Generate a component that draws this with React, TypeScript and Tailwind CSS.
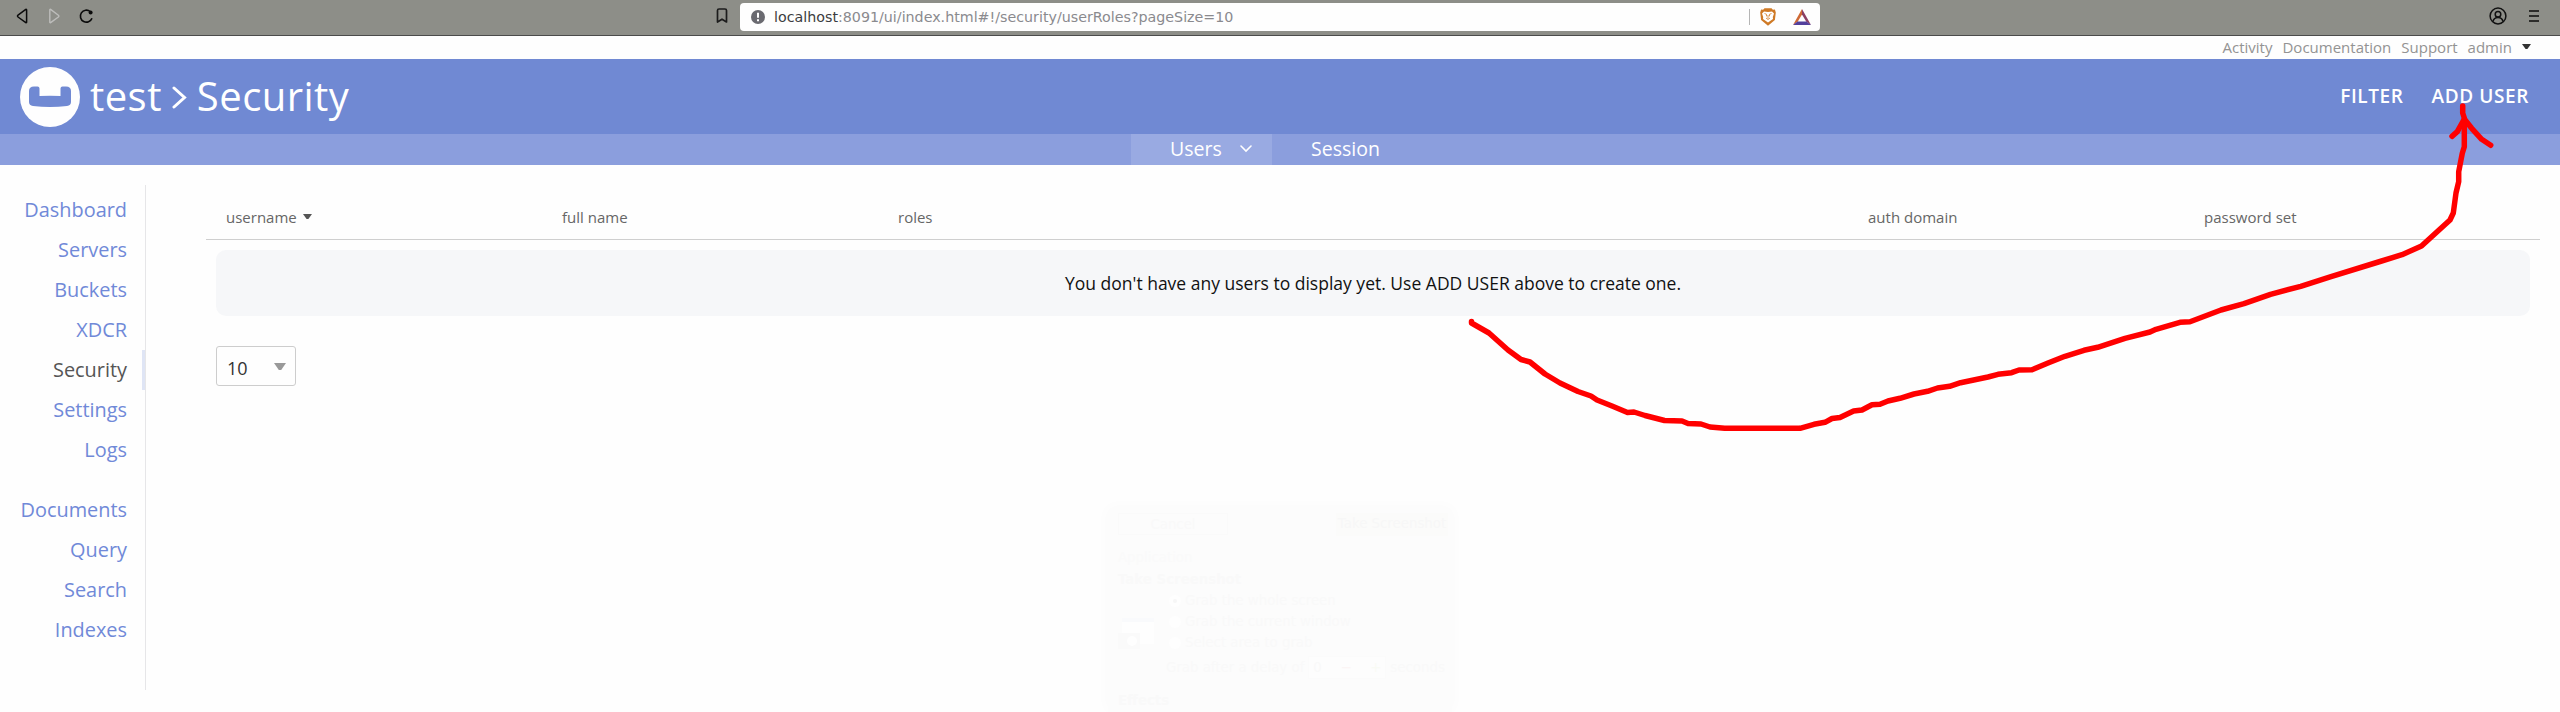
import React from "react";

const primaryLinks = ["Dashboard", "Servers", "Buckets", "XDCR", "Security", "Settings", "Logs"];
const secondaryLinks = ["Documents", "Query", "Search", "Indexes"];

function Caret({ className }: { className: string }) {
  return (
    <svg viewBox="0 0 10 6" preserveAspectRatio="none" className={className}>
      <path d="M0 0h10L6 6H4z" fill="currentColor" />
    </svg>
  );
}

function BrowserBar() {
  return (
    <div className="flex h-9 items-center border-b border-[#4b4b4b] bg-[#8d8e88] pb-[3px] font-['DejaVu_Sans',sans-serif]">
      <div className="flex w-[740px] items-center">
        <svg className="ml-4 h-4 w-3" viewBox="0 0 12 16" fill="none" stroke="#0b0b0b" strokeWidth="1.5" strokeLinejoin="round">
          <path d="M10.6 1.8v12.4c0 .5-.4.6-.8.4L2 9c-.7-.5-.7-1.3 0-1.8L9.8 1.4c.4-.3.8-.1.8.4z" />
        </svg>
        <svg className="ml-5 h-4 w-3" viewBox="0 0 12 16" fill="none" stroke="#bdbdbb" strokeWidth="1.4" strokeLinejoin="round">
          <path d="M1.8 1.8v12.4c0 .5.4.6.8.4L10.4 9c.7-.5.7-1.3 0-1.8L2.6 1.4c-.4-.3-.8-.1-.8.4z" />
        </svg>
        <svg className="ml-[19px] h-4 w-[15px]" viewBox="0 0 15 16" fill="none" stroke="#0b0b0b" strokeWidth="1.6">
          <path d="M13 10.2A6 6 0 1 1 11.2 3.5" />
          <circle cx="11.6" cy="4.6" r="2" fill="#0b0b0b" stroke="none" />
        </svg>
        <svg className="ml-auto mr-[12px] h-4 w-[12px]" viewBox="0 0 12 16" fill="none" stroke="#1c1c1c" strokeWidth="1.7" strokeLinejoin="round">
          <path d="M1.5 2.5q0-1.5 1.5-1.5h6q1.5 0 1.5 1.5V14L6 11.2 1.5 14z" />
        </svg>
      </div>
      <div className="mt-[2px] flex h-7 w-[1080px] items-center rounded bg-[#fefefe] text-[14.26px] text-[#8a8a8e]">
        <svg className="ml-[11px] size-[14px]" viewBox="0 0 14 14">
          <circle cx="7" cy="7" r="7" fill="#6a6a70" />
          <path d="M6 2.8h2v5H6zM6 9.2h2v2H6z" fill="#fff" />
        </svg>
        <span className="ml-[9px] whitespace-pre pt-[2px]"><span className="text-[#3c3c40]">localhost</span>:8091/ui/index.html#!/security/userRoles?pageSize=10</span>
        <span className="ml-auto h-4 w-px bg-[#b5b5b5]" />
        <svg className="ml-[10px] h-[18px] w-4" viewBox="0 0 16 18">
          <path d="M4.5.3h7l1.4 1.5 2-.2.9 3-.9 7.4L8 17.8l-6.9-5.8L.2 4.6l.9-3 2 .2z" fill="#cf7a26" />
          <path d="M4 3.5l4 .5 4-.5 2 2-1.2 3.5.2 2L8 14.5 3 11l.2-2L2 5.5z" fill="#fff" />
          <path d="M4.5 5.5l2 .8v2M11.5 5.5l-2 .8v2M8 7v3.5M6 10l2 1.5 2-1.5" fill="none" stroke="#cf7a26" strokeWidth=".8" />
        </svg>
        <svg className="ml-[17px] mr-[9px] h-4 w-[18px]" viewBox="0 0 18 16">
          <path d="M9 0v5.5L4.8 12.5 0 16z" fill="#cf6a35" />
          <path d="M9 0l9 16-4.8-3.5L9 5.5z" fill="#8c4064" />
          <path d="M0 16l4.5-3.6h9L18 16z" fill="#53409c" />
        </svg>
      </div>
      <svg className="ml-auto h-[18px] w-[18px]" viewBox="0 0 18 18" fill="none" stroke="#111" strokeWidth="1.5">
        <circle cx="9" cy="9" r="7.9" />
        <circle cx="9" cy="7.3" r="2.8" />
        <path d="M4 14.5c.6-2.7 2.4-4 5-4s4.4 1.3 5 4" />
      </svg>
      <svg className="ml-[22px] mr-[21px] h-3 w-[10px]" viewBox="0 0 10 12">
        <path d="M0 0h10v2H0zM0 5h10v2H0zM0 10h10v2H0z" fill="#2c2c2a" />
      </svg>
    </div>
  );
}

function AccountBar() {
  return (
    <div className="flex h-[23px] items-center justify-end gap-[10px] pr-[29px] text-[15px] text-[#939393]">
      <a>Activity</a>
      <a>Documentation</a>
      <a>Support</a>
      <a>admin</a>
      <Caret className="-mt-[2px] h-[5px] w-[9px] text-[#333]" />
    </div>
  );
}

function Header() {
  return (
    <header className="text-white">
      <div className="flex h-[75px] items-center bg-[#7089d3]">
        <svg className="ml-5 size-[60px]" viewBox="0 0 60 60">
          <circle cx="30" cy="30" r="30" fill="#fefefe" />
          <path d="M9 24q0-4.500 5-4.500h3.500q2 0 2 2V29q10.500-.7 21 0v-7.500q0-2 2-2H46q5 0 5 4.500v11q0 3.500-4 4-17 2-34 0-4-.5-4-4z" fill="#7089d3" />
        </svg>
        <h1 className="mb-[1px] ml-[10px] flex items-center text-[40px] leading-none tracking-[0.45px]">
          <span>test</span>
          <svg className="mx-[10px] mt-[3px] h-[23px] w-[15px]" viewBox="0 0 15 23" fill="none" stroke="currentColor" strokeWidth="3" strokeLinecap="round">
            <path d="M2 2l10.5 9.5L2 21" />
          </svg>
          <span>Security</span>
        </h1>
        <div className="ml-auto mr-[31px] flex gap-7 text-[19px] font-semibold tracking-[0.6px]">
          <a>FILTER</a>
          <a>ADD USER</a>
        </div>
      </div>
      <nav className="flex h-[31px] bg-[#8b9edd] pb-[2px] pl-[1131px] text-[19.5px]">
        <a className="-mb-[2px] flex w-[141px] items-center bg-[#99aae2] pb-[2px] pl-[39px]">
          Users
          <svg className="ml-[18px] mt-px h-2 w-3" viewBox="0 0 12 8" fill="none" stroke="currentColor" strokeWidth="1.6" strokeLinecap="round">
            <path d="M1 1l5 5 5-5" />
          </svg>
        </a>
        <a className="flex items-center pl-[39px]">Session</a>
      </nav>
    </header>
  );
}

function Sidebar() {
  return (
    <aside className="mt-5 h-[505px] w-[146px] border-r border-[#e6e6e8] pt-[5px] text-right text-[19.9px] leading-10 text-[#7089d8]">
      {primaryLinks.map((link) => (
        <a key={link} className={link === "Security" ? "block border-r-[3px] border-[#dfe5f5] pr-[15px] text-[#555]" : "block pr-[18px]"}>
          {link}
        </a>
      ))}
      <div className="pt-5">
        {secondaryLinks.map((link) => (
          <a key={link} className="block pr-[18px]">{link}</a>
        ))}
      </div>
    </aside>
  );
}

function Users() {
  return (
    <main className="ml-[60px] mr-5 flex-1">
      <div className="grid h-[75px] grid-cols-[336px_336px_1fr_336px_336px] border-b border-[#cfcfcf] pl-5 pt-[41px] text-[15px] text-[#666]">
        <span className="flex gap-[6px]">
          username
          <Caret className="mt-[8px] h-[5px] w-[9px] text-[#555]" />
        </span>
        <span>full name</span>
        <span>roles</span>
        <span>auth domain</span>
        <span>password set</span>
      </div>
      <div className="mx-[10px] mt-[10px] flex h-[66px] items-center justify-center rounded-[10px] bg-[#f6f7f9] text-[17.5px] text-[#111]">
        You don't have any users to display yet. Use ADD USER above to create one.
      </div>
      <div className="ml-[10px] mt-[30px] flex h-10 w-20 items-center justify-between rounded-[3px] border border-[#cdcdcd] pl-[10px] pr-[9px] text-[18px] text-[#333]">
        <span className="pt-[5px]">10</span>
        <Caret className="h-[7px] w-3 text-[#999]" />
      </div>
    </main>
  );
}

function FadingDialog() {
  return (
    <div className="absolute left-[1108px] top-[510px] h-[202px] w-[344px] bg-[#fcfcfc] pl-[10px] font-['DejaVu_Sans',sans-serif] text-[13.33px] leading-[21px] text-[#f9f9f9] shadow-[0_-2px_14px_#fafafa]">
      <div className="flex justify-between pr-1 text-center">
        <span className="mt-[3px] h-[22px] w-[110px] border border-[#fafafa]">Cancel</span>
        <span className="mt-[3px] h-[23px] w-[112px] whitespace-nowrap bg-[#fbfbfa] text-[#f7f7f7]">Take Screenshot</span>
      </div>
      <div className="mt-[11px] text-[#fafafa]">Application</div>
      <div className="mt-px font-bold text-[#f9f9f9]">Take Screenshot</div>
      <div className="flex">
        <svg className="mt-[26px] h-9 w-10" viewBox="0 0 40 36">
          <path d="M4 2h32v26H4z" fill="#fefefe" />
          <path d="M4 2h32v4H4z" fill="#f9fafc" />
          <path d="M0 17h22v16H0z" fill="#fafafa" />
          <circle cx="14" cy="25" r="5" fill="#fefefe" />
        </svg>
        <div className="ml-[11px]">
          {["Grab the whole screen", "Grab the current window", "Select area to grab"].map((label, i) => (
            <div key={label} className="flex items-center gap-1">
              <span className="flex size-3 items-center justify-center rounded-full bg-[#fefefe]">
                {i === 0 && <span className="size-1 rounded-full bg-[#f6f6f6]" />}
              </span>
              {label}
            </div>
          ))}
        </div>
      </div>
      <div className="ml-[48px] mt-[3px] flex items-center gap-1 whitespace-nowrap">
        Grab after a delay of
        <span className="flex w-[78px] shrink-0 justify-between border border-[#fbfbfb] bg-[#fdfdfd] px-1"><span>0</span><span className="text-[#fbf5f5]">−</span><span className="text-[#f9fbf5]">+</span></span>
        seconds
      </div>
      <div className="mt-[11px] font-bold text-[#f9f9f9]">Effects</div>
    </div>
  );
}

function HandDrawnArrow() {
  return (
    <svg className="pointer-events-none absolute left-0 top-0 h-[712px] w-[2560px]" viewBox="0 0 2560 712" fill="none" stroke="#ff0000" strokeWidth="5.5" strokeLinecap="round" strokeLinejoin="round">
      <path d="M1471.5 321.5V323L1489 333L1508 350L1521 359.5L1530 362L1545 374L1560 383L1578 391.5L1591 396L1597 400L1612 406L1627.5 412.5L1634 412L1645 415.5L1664.5 420.5L1682 421L1688 423.5L1701 424L1710 427L1724.7 428.3H1800L1814 424.3L1825 422.3L1832 418.5L1840 417.5L1853.6 411L1862 410L1872 404.7L1880 404.3L1888 401L1900 398.3L1914 394L1927.6 391.3L1937.5 388L1949.6 386.3L1960.6 382.7L1988 377L1998 374.3L2011.6 372.7L2019 370L2032 369.7L2048 363L2065 356.3L2084 350.3L2097.7 347.3L2125 338.3L2150 332L2156 329.3L2180 322.3L2190 321.7L2221 310L2244 303.7L2270.5 294.3L2300.7 286.3L2331 276.7L2380 261.5L2402 254.7L2421.5 246L2450 220L2453.3 213L2456 193L2458.7 181.7V171.7L2462.3 153.3L2464.3 146.7V118L2462.7 113V106" />
      <path d="M2452 136.3L2457.3 131.7L2464.3 119L2471.7 128.3L2481.7 139.3L2490.7 145.3" />
    </svg>
  );
}

export default function App() {
  return (
    <div className="relative h-[712px] w-[2560px] overflow-hidden bg-[#fefefe] font-['Open_Sans',sans-serif]">
      <BrowserBar />
      <AccountBar />
      <Header />
      <div className="flex">
        <Sidebar />
        <Users />
      </div>
      <FadingDialog />
      <HandDrawnArrow />
    </div>
  );
}
